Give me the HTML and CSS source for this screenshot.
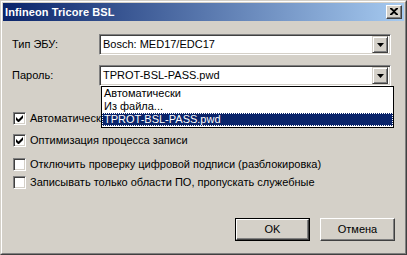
FILE: index.html
```html
<!DOCTYPE html>
<html lang="ru">
<head>
<meta charset="utf-8">
<title>Infineon Tricore BSL</title>
<link rel="stylesheet" href="styles.css">
</head>
<body>
<div class="window">
  <div class="titlebar">
    <span class="title">Infineon Tricore BSL</span>
    <span class="close">
      <svg width="8" height="7" viewBox="0 0 8 7"><path d="M0 0h2l2 2 2-2h2v1L5 3.5 8 6v1H6L4 5 2 7H0V6l3-2.5L0 1z" fill="#000"/></svg>
    </span>
  </div>
  <div class="content">
    <div class="field first">
      <span class="label">Тип ЭБУ:</span>
      <div class="combo">
        <span class="value">Bosch: MED17/EDC17</span>
        <span class="drop"><svg width="7" height="4" viewBox="0 0 7 4"><path d="M0 0h7L3.5 4z" fill="#000"/></svg></span>
      </div>
    </div>
    <div class="field second">
      <span class="label">Пароль:</span>
      <div class="combo">
        <span class="value">TPROT-BSL-PASS.pwd</span>
        <span class="drop"><svg width="7" height="4" viewBox="0 0 7 4"><path d="M0 0h7L3.5 4z" fill="#000"/></svg></span>
      </div>
    </div>
    <div class="check c1"><span class="box"><svg width="7" height="7" viewBox="0 0 7 7"><path d="M0 2v3l2 2h1l4-4V0L2.5 4.5z" fill="#000"/></svg></span><span class="text">Автоматическое определение пароля</span></div>
    <div class="check c2"><span class="box"><svg width="7" height="7" viewBox="0 0 7 7"><path d="M0 2v3l2 2h1l4-4V0L2.5 4.5z" fill="#000"/></svg></span><span class="text">Оптимизация процесса записи</span></div>
    <div class="check c3"><span class="box"></span><span class="text">Отключить проверку цифровой подписи (разблокировка)</span></div>
    <div class="check c4"><span class="box"></span><span class="text">Записывать только области ПО, пропускать служебные</span></div>
    <div class="buttons">
      <span class="btn default"><span class="face">OK</span></span>
      <span class="btn"><span class="face">Отмена</span></span>
    </div>
  </div>
  <ul class="list">
    <li>Автоматически</li>
    <li>Из файла...</li>
    <li class="selected">TPROT-BSL-PASS.pwd</li>
  </ul>
</div>
</body>
</html>
```
FILE: styles.css
```css
* { box-sizing: border-box; }
html, body { margin: 0; padding: 0; }
body {
  width: 407px;
  height: 255px;
  background: #d4d0c8;
  font-family: "Liberation Sans", Arial, sans-serif;
  font-size: 11px;
  color: #000;
  overflow: hidden;
}
.window {
  position: relative;
  width: 407px;
  height: 255px;
  background: #d4d0c8;
  border: 1px solid;
  border-color: #d4d0c8 #404040 #404040 #d4d0c8;
}
.window::before {
  content: "";
  position: absolute;
  inset: 0;
  border: 1px solid;
  border-color: #fff #808080 #808080 #fff;
  pointer-events: none;
}
.titlebar {
  margin: 2px 2px 0 2px;
  height: 18px;
  background: linear-gradient(to right, #0a246a, #a6caf0);
  display: flex;
  align-items: center;
  justify-content: space-between;
  padding: 0 2px 0 2px;
}
.title {
  color: #fff;
  font-weight: bold;
  font-size: 11px;
  line-height: 18px;
  letter-spacing: 0.1px;
}
.close {
  width: 16px;
  height: 14px;
  background: #d4d0c8;
  border: 1px solid;
  border-color: #fff #404040 #404040 #fff;
  box-shadow: inset -1px -1px 0 #808080;
  display: flex;
  align-items: center;
  justify-content: center;
  padding: 0 1px 1px 0;
}
.close svg { display: block; }
.content {
  padding: 0 0 0 11px;
  display: flex;
  flex-direction: column;
}
.field {
  display: grid;
  grid-template-columns: 87px 292px;
  align-items: center;
  height: 21px;
}
.field.first { margin-top: 13px; }
.field.second { margin-top: 10px; }
.label { line-height: 13px; }
.combo {
  height: 21px;
  background: #fff;
  border: 1px solid;
  border-color: #808080 #fff #fff #808080;
  box-shadow: inset 1px 1px 0 #404040, inset -1px -1px 0 #d4d0c8;
  display: flex;
  align-items: center;
  justify-content: space-between;
  padding: 2px 2px 2px 2px;
}
.value { padding-left: 1px; line-height: 13px; }
.drop {
  width: 16px;
  height: 17px;
  background: #d4d0c8;
  border: 1px solid;
  border-color: #d4d0c8 #404040 #404040 #d4d0c8;
  box-shadow: inset 1px 1px 0 #fff, inset -1px -1px 0 #808080;
  display: flex;
  align-items: center;
  justify-content: center;
}
.drop svg { display: block; }
.check {
  display: flex;
  align-items: center;
  height: 13px;
  padding-left: 1px;
}
.check.c1 { margin-top: 26px; }
.check.c2 { margin-top: 9px; }
.check.c3 { margin-top: 11px; }
.check.c4 { margin-top: 5px; }
.box {
  width: 13px;
  height: 13px;
  background: #fff;
  border: 1px solid;
  border-color: #808080 #fff #fff #808080;
  box-shadow: inset 1px 1px 0 #404040, inset -1px -1px 0 #d4d0c8;
  display: flex;
  align-items: center;
  justify-content: center;
  margin-right: 4px;
  flex: none;
}
.box svg { display: block; }
.text { line-height: 13px; white-space: nowrap; }
.buttons {
  display: flex;
  justify-content: flex-end;
  gap: 10px;
  margin-top: 29px;
  padding-right: 11px;
}
.btn {
  width: 75px;
  height: 23px;
  background: #d4d0c8;
  border: 1px solid;
  border-color: #fff #404040 #404040 #fff;
  box-shadow: inset -1px -1px 0 #808080;
  display: flex;
}
.btn .face {
  flex: 1;
  display: flex;
  align-items: center;
  justify-content: center;
  line-height: 13px;
}
.btn.default {
  border: 1px solid #000;
  box-shadow: none;
}
.btn.default .face {
  border: 1px solid;
  border-color: #fff #404040 #404040 #fff;
  box-shadow: inset -1px -1px 0 #808080;
}
.list {
  position: absolute;
  left: 100px;
  top: 85px;
  width: 293px;
  height: 42px;
  margin: 0;
  padding: 0;
  list-style: none;
  background: #fff;
  border: 1px solid #000;
}
.list li {
  height: 13px;
  line-height: 13px;
  padding-left: 2px;
  white-space: nowrap;
}
.list li.selected {
  background: #0a246a;
  color: #fff;
  outline: 1px dotted #fff;
  outline-offset: -1px;
  padding-left: 2px;
}
```
